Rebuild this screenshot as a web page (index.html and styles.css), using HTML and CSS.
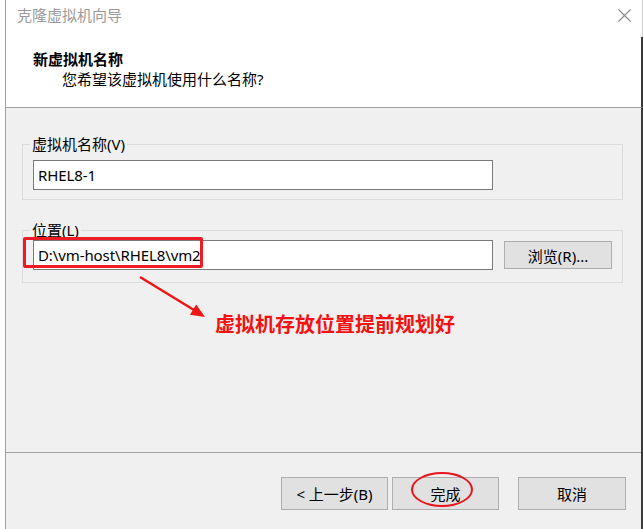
FILE: index.html
```html
<!DOCTYPE html>
<html lang="zh-CN">

<head>
     <meta charset="UTF-8">
     <meta name="viewport" content="width=device-width, initial-scale=1.0">
     <title>克隆虚拟机向导</title>
     <link rel="stylesheet" href="styles.css">
</head>

<body>
     <div class="window">
          <div class="titlebar">
               <span class="title">克隆虚拟机向导</span>
               <svg class="close" width="13" height="13" viewBox="0 0 13 13">
                    <path d="M0.5 0.5 L12.5 12.5 M12.5 0.5 L0.5 12.5" stroke="#8a8a8a" stroke-width="1.1" fill="none"/>
               </svg>
          </div>
          <div class="header">
               <h1>新虚拟机名称</h1>
               <p>您希望该虚拟机使用什么名称?</p>
          </div>
          <div class="main">
               <fieldset class="group">
                    <legend>虚拟机名称(V)</legend>
                    <div class="row">
                         <div class="textbox">RHEL8-1</div>
                    </div>
               </fieldset>
               <fieldset class="group second">
                    <legend>位置(L)</legend>
                    <div class="row">
                         <div class="textbox">D:\vm-host\RHEL8\vm2</div>
                         <button class="btn browse">浏览(R)...</button>
                         <span class="mark"></span>
                    </div>
               </fieldset>
               <p class="note">虚拟机存放位置提前规划好</p>
               <svg class="arrow" width="90" height="60" viewBox="0 0 90 60">
                    <line x1="10" y1="7" x2="64" y2="40" stroke="#ee1515" stroke-width="2.5"/>
                    <polygon points="60,44.8 66.2,34.6 75,47" fill="#ee1515"/>
               </svg>
               <div class="spacer"></div>
               <div class="footer">
                    <button class="btn">&lt; 上一步(B)</button>
                    <button class="btn finish">完成<span class="ring"></span></button>
                    <button class="btn cancel">取消</button>
               </div>
          </div>
     </div>
</body>

</html>
```

FILE: styles.css
```css
* {
     margin: 0px;
     padding: 0px;
     box-sizing: border-box;
     font-family: "Noto Sans", "Noto Sans CJK SC", sans-serif;
}

body {
     width: 643px;
     height: 529px;
     overflow: hidden;
     background-color: #fff;
     font-size: 15px;
     color: #000;
}

.window {
     margin-left: 5px;
     width: 638px;
     height: 529px;
     border-left: 1px solid #a0a0a0;
     display: flex;
     flex-direction: column;
}

.titlebar {
     height: 37px;
     display: flex;
     justify-content: space-between;
     align-items: flex-start;
     padding: 0px 11px 0px 11px;
     background-color: #fff;
     border-right: 1px solid #d0d0d0;
     .title {
          line-height: 30px;
          color: #9a9a9a;
          font-size: 15px;
     }
     .close {
          margin-top: 9px;
     }
}

.header {
     height: 71px;
     background-color: #fff;
     padding: 12px 0px 0px 27px;
     border-right: 2px solid #3a3a3a;
     border-bottom: 1px solid #a0a0a0;
     h1 {
          font-size: 15px;
          line-height: 20px;
          font-weight: 700;
     }
     p {
          line-height: 20px;
          padding-left: 29px;
     }
}

.main {
     flex: 1;
     position: relative;
     background-color: #f0f0f0;
     border-right: 2px solid #3a3a3a;
     padding-top: 26px;
     display: flex;
     flex-direction: column;
}

.group {
     margin: 0px 18px 0px 16px;
     border: 1px solid #dcdcdc;
     padding: 6px 10px 9px 10px;
     legend {
          margin-left: -3px;
          padding: 0px 2px;
          line-height: 20px;
          font-size: 15px;
     }
}

.group.second {
     margin-top: 20px;
     padding-top: 0px;
     padding-bottom: 12px;
}

.row {
     display: flex;
     align-items: center;
     gap: 11px;
     position: relative;
}

.textbox {
     width: 460px;
     height: 30px;
     background-color: #fff;
     border: 1px solid #7a7a7a;
     padding-left: 4px;
     line-height: 28px;
     letter-spacing: -0.1px;
}

.btn {
     height: 33px;
     width: 107px;
     background-color: #e1e1e1;
     border: 1px solid #adadad;
     font-size: 15px;
     color: #000;
     position: relative;
}

.browse {
     width: 108px;
     height: 28px;
}

.mark {
     position: absolute;
     left: -10px;
     top: -3px;
     width: 180px;
     height: 31px;
     border: 3px solid #ee1b24;
     border-radius: 2px;
}

.note {
     margin-top: 27px;
     padding-left: 209px;
     font-size: 20px;
     line-height: 28px;
     font-weight: 700;
     color: #f21212;
     font-family: "Noto Sans CJK SC", sans-serif;
}

.arrow {
     position: absolute;
     left: 124px;
     top: 162px;
}

.spacer {
     flex: 1;
}

.footer {
     height: 77px;
     border-top: 1px solid #a0a0a0;
     padding: 24px 15px 0px 0px;
     display: flex;
     justify-content: flex-end;
     gap: 4px;
     .cancel {
          margin-left: 15px;
          width: 108px;
     }
}

.ring {
     position: absolute;
     left: 18px;
     top: -6px;
     width: 62px;
     height: 35px;
     border: 2px solid #e8161c;
     border-radius: 50%;
}
```
